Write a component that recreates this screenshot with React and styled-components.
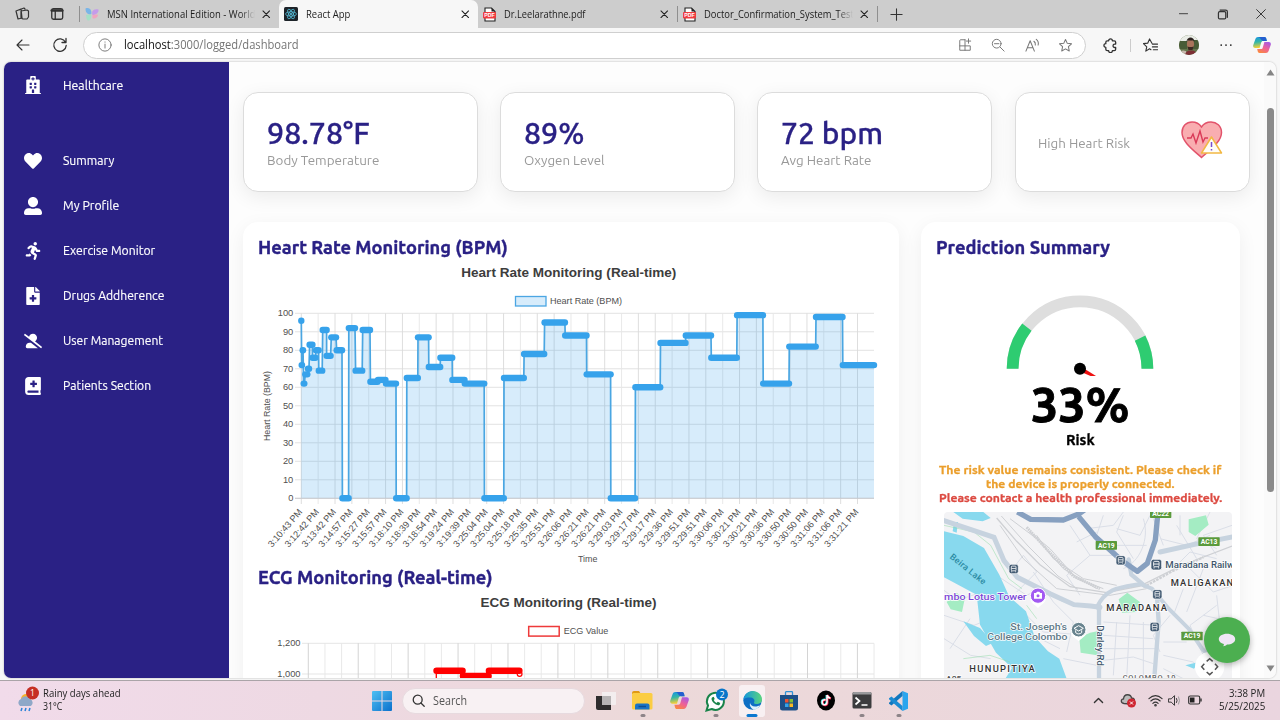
import React, { useLayoutEffect, useRef, useState } from "react";
import styled, { createGlobalStyle } from "styled-components";
import {
  FaHospital, FaHeart, FaUserAlt, FaRunning, FaFileMedical, FaUserAltSlash, FaBookMedical,
} from "react-icons/fa";

const ubuntu = `Ubuntu, "Noto Sans", sans-serif`;
const segoe = `"Segoe UI", "Open Sans", sans-serif`;
const arial = `Arial, "Liberation Sans", sans-serif`;

const GlobalStyle = createGlobalStyle`
  * { box-sizing: border-box; }
  body { margin: 0; overflow: hidden; font-family: ${ubuntu}; }
  svg { display: block; flex: none; }
`;

/* ---------- text that keeps a given line width ---------- */
const FitBox = styled.span`
  display: block;
  flex: none;
  width: ${(p) => p.$w}px;
  white-space: nowrap;
`;
const FitInner = styled.span`
  display: inline-block;
  transform-origin: 0 50%;
`;
function Fit({ w, children }) {
  const ref = useRef(null);
  const [scale, setScale] = useState(1);
  useLayoutEffect(() => {
    setScale(w / ref.current.offsetWidth);
  }, [w]);
  return (
    <FitBox $w={w}>
      <FitInner ref={ref} style={{ transform: `scaleX(${scale})` }}>{children}</FitInner>
    </FitBox>
  );
}

/* ---------- browser frame ---------- */
const Screen = styled.div`
  width: 1280px;
  height: 720px;
  display: flex;
  flex-direction: column;
  background: #f7f7f7;
  overflow: hidden;
`;
const TabStrip = styled.div`
  height: 28px;
  flex: none;
  display: flex;
  align-items: center;
  background: #cdcdcd;
  font: 11.5px ${segoe};
  color: #1c1c1c;
`;
const Slot = styled.span`
  display: flex;
  flex: none;
  align-items: center;
  justify-content: center;
  width: ${(p) => p.$w || 20}px;
  margin-left: ${(p) => p.$ml || 0}px;
`;
const Divider = styled.span`
  width: 1px;
  height: ${(p) => p.$h || 16}px;
  flex: none;
  margin-left: ${(p) => p.$ml || 0}px;
  background: ${(p) => p.$c || "#8f8f8f"};
`;
const Tab = styled.div`
  height: 28px;
  flex: none;
  width: ${(p) => p.$w}px;
  display: flex;
  align-items: center;
  padding-left: ${(p) => p.$pl || 5}px;
  padding-right: 5px;
  border-radius: 7px 7px 0 0;
  background: ${(p) => (p.$active ? "#f7f7f7" : "transparent")};
`;
const TabLabel = styled.span`
  flex: 1;
  margin-left: 8px;
  overflow: hidden;
  line-height: 18px;
  mask-image: ${(p) => (p.$fade ? "linear-gradient(90deg,#000 90%,transparent 100%)" : "none")};
`;
const WindowButtons = styled.div`
  margin-left: auto;
  display: flex;
  align-items: center;
  gap: 19px;
  padding-right: 9px;
`;
const Toolbar = styled.div`
  height: 34px;
  flex: none;
  display: flex;
  align-items: center;
  background: #f7f7f7;
`;
const AddressBar = styled.div`
  width: 1003px;
  height: 27px;
  margin-left: 13px;
  padding: 0 10px 0 14px;
  display: flex;
  align-items: center;
  border: 1px solid #cfcfcf;
  border-radius: 14px;
  background: #fff;
`;
const Url = styled.div`
  flex: 1;
  margin-left: 12px;
  font: 12.3px/18px ${segoe};
  color: #757575;
  b { font-weight: 400; color: #111; }
`;
const Avatar = styled.span`
  width: 20px;
  height: 20px;
  border-radius: 50%;
  overflow: hidden;
`;

/* ---------- application ---------- */
const Viewport = styled.div`
  width: 1272.500px;
  height: 615.500px;
  flex: none;
  margin-left: 3.500px;
  display: flex;
  border-radius: 7px;
  background: #fdfdfd;
  overflow: hidden;
  box-shadow: 0 0 2px rgba(0, 0, 0, 0.3);
`;
const Sidebar = styled.nav`
  width: 225.500px;
  flex: none;
  display: flex;
  flex-direction: column;
  background: #2a2185;
`;
const NavItem = styled.a`
  height: 45px;
  flex: none;
  display: flex;
  align-items: center;
  padding-left: 20.500px;
  gap: 21px;
  color: #fff;
  font: 12.500px/20px ${ubuntu};
  -webkit-text-stroke: 0.150px #fff;
  margin-bottom: ${(p) => (p.$brand ? 30.500 : 0)}px;
  svg { margin-top: 1px; width: 18px; height: 18px; }
`;
const Main = styled.main`
  flex: 1;
  min-width: 0;
  padding: 30px 0 0 14px;
`;
const StatRow = styled.section`
  display: grid;
  grid-template-columns: repeat(4, 235px);
  column-gap: 22.200px;
`;
const StatCard = styled.article`
  height: 100px;
  padding: 0 25px 0 22.500px;
  display: flex;
  align-items: center;
  justify-content: space-between;
  border: 1px solid #dcdcdc;
  border-radius: 15px;
  background: #fff;
  box-shadow: 0 5px 19px rgba(0, 0, 0, 0.075);
  > svg { margin-bottom: 4px; }
`;
const StatValue = styled.div`
  font: 500 29.800px/36px ${ubuntu};
  color: #2a2185;
  -webkit-text-stroke: 0.300px #2a2185;
`;
const StatLabel = styled.div`
  font: 13.800px/18px ${ubuntu};
  color: #999;
  margin-top: ${(p) => (p.$alone ? 2 : 0)}px;
`;
const Panels = styled.section`
  display: flex;
  align-items: flex-start;
  gap: 22px;
  margin-top: 30px;
`;
const Panel = styled.article`
  width: ${(p) => p.$w}px;
  height: 700px;
  border-radius: 15px;
  padding: 13.500px 15.500px;
  background: #fff;
  box-shadow: 0 5px 19px rgba(0, 0, 0, 0.06);
`;
const Heading = styled.h2`
  margin: 0 0 0 -0.500px;
  font: 700 18px/23px ${ubuntu};
  color: #2a2185;
  -webkit-text-stroke: 0.350px #2a2185;
`;
const ChartBox = styled.div`
  height: ${(p) => p.$h}px;
  margin: 1px 0 -1px -6.500px;
  overflow: hidden;
`;
const GaugeBox = styled.div`
  display: flex;
  flex-direction: column;
  align-items: center;
  padding: 31px 1px 0 0;
`;
const GaugeValue = styled.div`
  font: 700 48px/56px ${ubuntu};
  color: #000;
  -webkit-text-stroke: 0.900px #000;
`;
const GaugeLabel = styled.div`
  margin-top: -1px;
  font: 700 14.300px/18px ${ubuntu};
  -webkit-text-stroke: 0.300px #000;
`;
const Advice = styled.div`
  display: flex;
  flex-direction: column;
  align-items: center;
  margin: 14.500px 0 7px;
  font: 700 11.700px/14px ${ubuntu};
`;
const AdviceLine = styled.div`
  color: ${(p) => (p.$urgent ? "#dc4a41" : "#eb9f2c")};
  -webkit-text-stroke: 0.300px currentColor;
`;
const MapFrame = styled.div`
  width: 288px;
  height: 200px;
  margin-left: 7.500px;
  border-radius: 4px;
  overflow: hidden;
`;
const Scrollbar = styled.div`
  width: 12px;
  flex: none;
  display: flex;
  flex-direction: column;
  align-items: center;
  padding: 6.500px 0 6px;
  background: #fafafa;
`;
const Thumb = styled.div`
  width: 7px;
  height: 384px;
  margin: 32.500px 0 auto;
  border-radius: 4px;
  background: #8a8a8a;
`;
const ChatButton = styled.button`
  position: absolute;
  left: 1204px;
  top: 617px;
  width: 46px;
  height: 46px;
  border: 0;
  padding: 0;
  border-radius: 50%;
  display: grid;
  place-items: center;
  background: #4caf50;
  box-shadow: 0 2px 6px rgba(0, 0, 0, 0.3);
`;

/* ---------- taskbar ---------- */
const Taskbar = styled.footer`
  height: 40px;
  flex: none;
  margin-top: 2.500px;
  display: flex;
  align-items: center;
  border-top: 1px solid #aaa4a8;
  background: linear-gradient(90deg, #f1dbea 0%, #eed9e3 25%, #ecd9d9 50%, #ecd8da 65%, #ead5df 100%);
  font: 10.200px/13px ${segoe};
  color: #222;
`;
const Weather = styled.div`
  width: 370px;
  padding: 0 0 2px 16px;
  display: flex;
  align-items: center;
  gap: 3px;
`;
const SearchBox = styled.div`
  width: 183px;
  height: 26px;
  margin-left: 10px;
  padding-left: 9px;
  display: flex;
  align-items: center;
  gap: 8px;
  border-radius: 13px;
  background: #f8f1f3;
  border: 1px solid #e7dadf;
  font: 12px/18px ${segoe};
  color: #555;
`;
const AppIcon = styled.div`
  position: relative;
  width: 26px;
  height: 32px;
  flex: none;
  margin-left: ${(p) => p.$ml ?? 10.600}px;
  display: grid;
  place-items: center;
  border-radius: 3px;
  background: ${(p) => (p.$active ? "#f8f0f2" : "transparent")};
  &::after {
    content: "";
    display: ${(p) => (p.$open || p.$active ? "block" : "none")};
    position: absolute;
    bottom: 0;
    left: 50%;
    transform: translateX(-50%);
    width: ${(p) => (p.$active ? 11 : 5)}px;
    height: 2.500px;
    border-radius: 2px;
    background: ${(p) => (p.$active ? "#0a78d0" : "#8d8488")};
  }
`;
const Tray = styled.div`
  margin-left: auto;
  padding: 0 15px 1px 0;
  display: flex;
  align-items: center;
`;
const Clock = styled.div`
  margin-left: 12px;
  width: 48px;
  display: flex;
  flex-direction: column;
  align-items: flex-end;
`;

/* ---------- small icons ---------- */
const Line = ({ s = 16, c = "#333", w = 1.1, children, vb = "0 0 16 16" }) => (
  <svg width={s} height={s} viewBox={vb} fill="none" stroke={c} strokeWidth={w} strokeLinecap="round" strokeLinejoin="round">
    {children}
  </svg>
);
const Close = ({ s = 10.5, w = 1.7 }) => <Line s={s} w={w} c="#222"><path d="M3 3l10 10M13 3L3 13" /></Line>;
const Star = "M8 1.6l1.9 4.1 4.5.5-3.3 3.1.9 4.5L8 11.6l-4 2.2.9-4.5L1.6 6.2l4.5-.5z";

const PdfIcon = () => (
  <svg width="13" height="15" viewBox="0 0 13 15">
    <path d="M2 1h6.5L12 4.5V14H2z" fill="#fff" stroke="#222" strokeWidth="1.1" />
    <path d="M8.5 1v3.5H12z" fill="#222" />
    <rect y="5" width="13" height="6.6" rx="1" fill="#f03b3f" />
    <text x="1.3" y="10.2" fontSize="5" fontWeight="700" fill="#fff" fontFamily="Liberation Sans" textLength="10.4" lengthAdjust="spacingAndGlyphs">PDF</text>
  </svg>
);
const MsnIcon = () => (
  <svg width="14" height="14" viewBox="0 0 14 14">
    <path d="M.5 1.500c4-1.500 6 1 6 5L5.500 7.500C2 7.500.5 5 .5 1.500z" fill="#79b5e8" />
    <path d="M1 8c2-1 4.500-.5 5.200-.5.3 3.500-.7 6-2.700 6S1.500 11 1 8z" fill="#a5e0c6" />
    <path d="M7 6c0-3 3-4.500 6.500-3.500C14 5.500 11 8 7.500 8z" fill="#c49bea" />
    <path d="M7.500 8c3-1 5.500-.5 5.500 0-.5 3-4 4.500-5.500 3z" fill="#f0a4c0" />
  </svg>
);
const ReactIcon = () => (
  <svg width="14" height="14" viewBox="0 0 14 14">
    <rect width="14" height="14" rx="1.500" fill="#1d2329" />
    <g fill="none" stroke="#5ccbe8" strokeWidth=".7">
      {[0, 60, 120].map((a) => <ellipse key={a} cx="7" cy="7" rx="5.400" ry="2.100" transform={`rotate(${a} 7 7)`} />)}
    </g>
    <circle cx="7" cy="7" r="1" fill="#5ccbe8" />
  </svg>
);
const Copilot = ({ s = 18 }) => (
  <svg width={s} height={s} viewBox="0 0 18 18">
    <defs>
      <linearGradient id="cpA" x1="0" y1="0" x2="0.2" y2="1">
        <stop offset="0" stopColor="#1793e4" /><stop offset=".5" stopColor="#36b7a5" /><stop offset="1" stopColor="#f6cf34" />
      </linearGradient>
      <linearGradient id="cpB" x1=".8" y1="0" x2="0.2" y2="1">
        <stop offset="0" stopColor="#a45be6" /><stop offset=".5" stopColor="#ee6197" /><stop offset="1" stopColor="#fb8a3c" />
      </linearGradient>
    </defs>
    <path d="M5 1h6.500c1 0 1.500.8 1.800 1.700L13.800 5H10c-1 0-1.500.7-1.800 1.600L6.600 12H2.200C.5 12-.2 10.700.3 9L2.400 3C2.900 1.800 3.700 1 5 1z" fill="url(#cpA)" />
    <path d="M5.500 1h6c1 0 1.500.8 1.800 1.700L13.800 5H10.500C8 5 8 2 5.500 1z" fill="#245fd0" />
    <path d="M13 17H6.500c-1 0-1.500-.8-1.800-1.700L4.200 13H8c1 0 1.500-.7 1.800-1.600L11.400 6h4.400c1.700 0 2.400 1.300 1.900 3l-2.100 6c-.5 1.200-1.300 2-2.600 2z" fill="url(#cpB)" />
  </svg>
);
const HeartRisk = () => (
  <svg width="44" height="40" viewBox="0 0 44 40">
    <path d="M21.500 37.500C12 29 2 21.500 2 12.500 2 6 6.500 2 12 2c4 0 7.500 2 9.500 5C23.500 4 27 2 31 2c5.500 0 10.500 4 10.500 10.500C41.500 21.500 31 29 21.500 37.500z" fill="#f9adb0" stroke="#e2536b" strokeWidth="1.500" />
    <path d="M7 18h4l2-4 3 9 4-12 3 11 2-4h3" fill="none" stroke="#da3a58" strokeWidth="1.400" />
    <path d="M31.500 17L41.500 33h-20z" fill="#fffdf6" stroke="#f2b844" strokeWidth="1.500" strokeLinejoin="round" />
    <path d="M31.500 22v5M31.500 29v1.500" stroke="#7a4fd0" strokeWidth="1.500" />
  </svg>
);

/* ---------- charts ---------- */
const TICKS = ["3:10:43", "3:12:42", "3:13:42", "3:14:57", "3:15:27", "3:15:57", "3:18:10", "3:18:39", "3:18:54", "3:19:24", "3:19:39", "3:25:04", "3:25:04", "3:25:18", "3:25:35", "3:25:51", "3:26:06", "3:26:21", "3:26:21", "3:29:03", "3:29:17", "3:29:17", "3:29:36", "3:29:51", "3:29:51", "3:30:06", "3:30:21", "3:30:21", "3:30:36", "3:30:50", "3:30:50", "3:31:06", "3:31:06", "3:31:21"];

/* start, end (px inside the chart) and bpm of every run of readings */
const RUNS = [
  [49.3, 49.3, 96], [49.7, 50, 72], [50.7, 51, 80], [51.7, 52.3, 62], [53.3, 55.3, 67], [56, 57, 70],
  [57.6, 60.4, 83], [60.6, 63.4, 76], [64, 66.6, 80], [66.8, 70.2, 69], [70.7, 74.6, 91], [74.6, 78.6, 77],
  [79.3, 84, 87], [84.7, 90, 80], [90.4, 96.6, 0], [96.8, 103, 92], [103.6, 110.2, 69], [110.7, 118, 91],
  [118.4, 125.5, 63], [126, 133.4, 64], [134, 144, 62], [144.2, 154.6, 0], [154.8, 165.8, 65], [166, 176.6, 87],
  [176.8, 188.2, 71], [188.4, 200.2, 76], [200.4, 212.5, 64], [212.8, 232.2, 62], [232.4, 251.8, 0],
  [252, 271.8, 65], [272.1, 292.2, 78], [292.6, 312.9, 95], [313.2, 334.5, 88], [334.7, 358.6, 67],
  [358.8, 383.1, 0], [383.4, 408.2, 60], [408.5, 433.5, 84], [433.8, 459, 88], [459.3, 484.8, 76],
  [485.1, 510.9, 99], [511.2, 537, 62], [537.3, 563.7, 82], [564, 590.5, 98], [590.8, 622, 72],
];
const hy = (v) => 238.3 - v * 1.85;

function HeartChart() {
  const pts = RUNS.flatMap(([a, b, v]) => [`${a},${hy(v)}`, `${b},${hy(v)}`]).join(" ");
  return (
    <svg width="640" height="306" viewBox="0 0 640 306" fontFamily={arial} fill="#505050">
      <text x="209.300" y="17.300" fontSize="13.300" fontWeight="700" fill="#3d3d3d" textLength="215" lengthAdjust="spacingAndGlyphs">Heart Rate Monitoring (Real-time)</text>
      <rect x="263.500" y="36.500" width="30.500" height="9.500" fill="#d7ecfb" stroke="#4ba6e3" strokeWidth="1.300" />
      <text x="298" y="44.400" fontSize="9.800" textLength="72" lengthAdjust="spacingAndGlyphs">Heart Rate (BPM)</text>
      <text x="17.500" y="181" fontSize="9.800" transform="rotate(-90 17.500 181)" textLength="70" lengthAdjust="spacingAndGlyphs">Heart Rate (BPM)</text>
      {Array.from({ length: 11 }, (_, i) => (
        <g key={i}>
          <path d={`M43 ${hy(i * 10)}H622`} stroke="#dfdfdf" strokeWidth=".9" />
          <text x="41.300" y={hy(i * 10) + 2.9} textAnchor="end" fontSize="9.300">{i * 10}</text>
        </g>
      ))}
      {TICKS.map((t, i) => {
        const x = 49.3 + i * 16.855;
        return (
          <g key={i}>
            <path d={`M${x} 53.300V244`} stroke={i % 3 === 1 ? "#e6e6e6" : "#dadada"} strokeWidth=".9" />
            <text x={x + 1.5} y="252.300" textAnchor="end" fontSize="9.200" textLength="47" lengthAdjust="spacingAndGlyphs" transform={`rotate(-49 ${x + 1.5} 252.300)`}>{t} PM</text>
          </g>
        );
      })}
      <polygon points={`49.3,${hy(0)} ${pts} 622,${hy(0)}`} fill="#36a2eb" fillOpacity=".2" />
      <path d={`M43 ${hy(0)}H622`} stroke="#c7c7cc" strokeWidth=".9" />
      <polyline points={pts} fill="none" stroke="#4aa6e2" strokeWidth="1.700" />
      {RUNS.map(([a, b, v], i) => (
        <path key={i} d={`M${a} ${hy(v)}H${b + 0.01}`} stroke="#36a2eb" strokeWidth="6.400" strokeLinecap="round" />
      ))}
      <text x="326" y="302" fontSize="9.500" textLength="19.500" lengthAdjust="spacingAndGlyphs">Time</text>
    </svg>
  );
}

function EcgChart() {
  return (
    <svg width="640" height="110" viewBox="0 0 640 110" fontFamily={arial} fill="#505050">
      <text x="228.500" y="17.300" fontSize="13.300" fontWeight="700" fill="#3d3d3d" textLength="176" lengthAdjust="spacingAndGlyphs">ECG Monitoring (Real-time)</text>
      <rect x="276.700" y="36.500" width="30.500" height="9.600" fill="#fff" stroke="#ee3a3a" strokeWidth="1.500" />
      <text x="311.700" y="44.400" fontSize="9.800" textLength="44.500" lengthAdjust="spacingAndGlyphs">ECG Value</text>
      <text x="48.500" y="56.300" textAnchor="end" fontSize="9.300">1,200</text>
      <text x="48.500" y="87.300" textAnchor="end" fontSize="9.300">1,000</text>
      <path d="M50 53.300H622M50 84H622" stroke="#e2e2e2" strokeWidth=".9" />
      {Array.from({ length: 35 }, (_, i) => (
        <path key={i} d={`M${56.3 + i * 16.64} 53.300V110`} stroke={i % 3 ? "#e6e6e6" : "#cfcfcf"} strokeWidth=".9" />
      ))}
      <g stroke="#ff0000" fill="none">
        <path d="M184.300 82V110" strokeWidth="1.300" />
        <path d="M184.600 80.800H210.500M237 80.800H267.300M211 86H236.500" strokeWidth="6.600" strokeLinecap="round" />
        <circle cx="267.600" cy="84" r="2.400" strokeWidth="1.200" />
      </g>
    </svg>
  );
}

const arc = (from, to) => {
  const p = (deg) => {
    const r = (deg * Math.PI) / 180;
    return `${80 + 67.4 * Math.cos(r)} ${78.7 - 67.4 * Math.sin(r)}`;
  };
  return `M${p(from)}A67.4 67.4 0 0 1 ${p(to)}`;
};
const Gauge = () => (
  <svg width="160" height="86" viewBox="0 0 160 86" fill="none" strokeWidth="11.800">
    <path d={arc(180, 0)} stroke="#dedede" />
    <path d={arc(180, 142)} stroke="#2ecc71" />
    <path d={arc(27, 0)} stroke="#2ecc71" />
    <path d="M80 76L96 86H90.500L79 81z" fill="#ee1111" />
    <circle cx="80" cy="78.700" r="6" fill="#000" />
  </svg>
);

/* ---------- map ---------- */
const TransitStop = ({ x, y, s = 26 }) => (
  <g transform={`translate(${x} ${y}) scale(${s / 24})`}>
    <rect x="-13" y="-13" width="26" height="26" rx="6" fill="#425a72" stroke="#fff" strokeWidth="2" />
    <rect x="-6.500" y="-8" width="13" height="13" rx="2.500" fill="none" stroke="#fff" strokeWidth="2.200" />
    <path d="M-6-1.500H6M-5.500 9v-3M5.500 9v-3" stroke="#fff" strokeWidth="2.200" />
  </g>
);
const RoadBadge = ({ x, y, children }) => (
  <g>
    <rect x={x - 32} y={y - 13} width="64" height="26" rx="2" fill="#5a9a3c" />
    <text x={x - 25} y={y + 7} fontSize="19" fontWeight="700" fill="#fff" textLength="50" lengthAdjust="spacingAndGlyphs">{children}</text>
  </g>
);
const CityMap = () => (
  <svg width="288" height="200" viewBox="42 20 864 600" fontFamily="Roboto">
    <rect x="42" y="20" width="864" height="600" fill="#f3f3f5" />
    {/* minor streets */}
    <g fill="none" stroke="#dadee7" strokeWidth="3">
      <path d="M42 255l40 30 60-20M42 330l90 30 50-20M60 430l60-90M42 400l80 50 60 10M200 210l90 60 40-20 70 40M240 200l40-50 40 50-60 60M310 200l60 90 60 60-20 90M290 330l50 50 140 10M330 400l60 30M400 460l100 20M420 60l60 90-70 60 40 60M520 30l-20 60 60 50M560 70l70 20 30-60M480 150l80 0 60 70M530 120l120 0M580 30l-20 50 50 80M700 120l-30-80M690 100l80 20 70-30M740 60l60 100M750 30v60M840 20l-40 80 60 30M720 200l60-60 80 20M770 180l80 80 60-20M760 250l-30 80 70 60M820 190l-50 130M860 300l-80 60 40 90M720 330l-50 60 20 50M520 350l160 10M520 390l150 10M520 430l160 0M520 465l90-10 60 20M560 350l-10 160M600 330l-10 190M640 350v170M700 450l90 20 40 50M700 490l60 30M770 410l-70 0M830 380l76 30M860 270l20 180M910 350l-90-20" />
      <path d="M470 70l80-10 30-40M640 40c20 60-10 130-60 150M440 110l60-30M860 150l-40-60 86-30" />
    </g>
    {/* parks */}
    <g fill="#a4ecc3">
      <path d="M776 42l52-12 8 28-40 34-20-12zM448 398l32-16 22-4v72l-50-8zM566 282l26-20 38 28-10 30-44 2zM50 290l30-28 24 20-8 38-34-8z" />
    </g>
    {/* lake and canal */}
    <g fill="#88d9ee">
      <path d="M42 78l58 14 62 36 46 80 30 66 50 44 26 76 40 44 34 22 22 60v100H236l-10-100 20-32-48-46-22-38-26-46-10-90-98-52z" />
      <path d="M70 20h90l22 18-24 10-60-8zM72 50l12 0-4 32-12-4zM100 348l50 20 40 44-22 10-36-30zM766 480l40-10-14 20z" />
    </g>
    <path d="M42 60l90 20 50 40 54 100 40 30M240 470l-60-20-80 10M290 300l30 40" fill="none" stroke="#8edba4" strokeWidth="1.500" />
    {/* railway yard */}
    <g fill="none" stroke="#ced0d4">
      <path d="M200 38l60 70 70 70 90 66 110 18 100-20 120-60 156-60" strokeWidth="4" />
      <path d="M214 32l80 90 90 90 60 40M240 40l80 60 80 90 100 60M300 80l60 50 80 90 80 30M210 60l70 100 100 90 160 20 110-20M320 90l50 70 90 60 100 20" strokeWidth="3" />
      <path d="M290 66l70 76 70 70 80 38" strokeWidth="9" strokeDasharray="5 2" />
      <path d="M640 246l90-50 90-40" strokeWidth="7" strokeDasharray="8 3" />
    </g>
    {/* roads */}
    <g fill="none" stroke="#c7d3df" strokeLinecap="round">
      <path d="M42 46l90 30 60 20 30 70 40 50 100 50 70 32 50 4 28 4" strokeWidth="15" />
      <path d="M500 306c30-60 70-60 130-70l36 14 50 60 60 60 40 60 60 60" strokeWidth="12" />
      <path d="M507 300v230M640 238l-36-30-8-46M680 260l6 90-14 180" strokeWidth="13" />
      <path d="M690 140l100-22 120-24" strokeWidth="15" />
    </g>
    <g fill="none" stroke="#87a0c0" strokeLinejoin="round">
      <path d="M262 20l40 22 98 2 46-18 20-14M446 34l50 60 80 72 46 32 30-24 24-70 8-84" strokeWidth="16" />
    </g>
    {/* labels */}
    <RoadBadge x={529} y={120}>AC19</RoadBadge>
    <RoadBadge x={837} y={109}>AC13</RoadBadge>
    <RoadBadge x={692} y={25}>AC22</RoadBadge>
    <RoadBadge x={786} y={392}>AC19</RoadBadge>
    <text x="58" y="157" transform="rotate(39 58 157)" fontSize="26" fontWeight="500" fill="#2a8aa2" textLength="130">Beira Lake</text>
    <g stroke="#fff" strokeWidth="4" paintOrder="stroke" fontWeight="500">
      <text x="24" y="285" fontSize="29" fill="#7c47d6" textLength="266" lengthAdjust="spacingAndGlyphs">ombo Lotus Tower</text>
      <text x="241" y="373" fontSize="28" fill="#5f7a88" textLength="170" lengthAdjust="spacingAndGlyphs">St. Joseph's</text>
      <text x="172" y="403" fontSize="28" fill="#5f7a88" textLength="240" lengthAdjust="spacingAndGlyphs">College Colombo</text>
      <text x="706" y="188" fontSize="29" fill="#40566b" textLength="236" lengthAdjust="spacingAndGlyphs">Maradana Railway</text>
      <text x="722" y="243" fontSize="28" fill="#333" textLength="231">MALIGAKANDA</text>
      <text x="529" y="317" fontSize="28" fill="#333" textLength="182">MARADANA</text>
      <text x="118" y="499" fontSize="28" fill="#333" textLength="196">HUNUPITIYA</text>
      <text x="578" y="525" fontSize="22" fill="#666" textLength="158">COLOMBO 10</text>
      <text x="48" y="526" fontSize="22" fill="#555" textLength="46" lengthAdjust="spacingAndGlyphs">A05</text>
      <text x="501" y="360" transform="rotate(90 501 360)" fontSize="28" fill="#40566b" textLength="122" lengthAdjust="spacingAndGlyphs">Darley Rd</text>
    </g>
    <TransitStop x={251} y={191} />
    <TransitStop x={572} y={165} />
    <TransitStop x={679} y={178} s={30} />
    <TransitStop x={682} y={267} />
    <TransitStop x={674} y={365} />
    <g>
      <path d="M300 274c0 20 14 22 24 34 10-12 24-14 24-34z" fill="#fff" />
      <circle cx="324" cy="271" r="23" fill="#a259f2" stroke="#fff" strokeWidth="3" />
      <path d="M312 263h6l3-4h7l3 4h5v17h-24z" fill="#fff" />
      <circle cx="324" cy="271" r="4.500" fill="#a259f2" />
    </g>
    <g>
      <path d="M422 376c0 20 14 20 24 32 10-12 24-14 24-32z" fill="#fff" />
      <circle cx="446" cy="373" r="22" fill="#69848f" stroke="#fff" strokeWidth="3" />
      <path d="M432 369l14-8 14 8-14 8zM437 375v7c6 5 12 5 18 0v-7" fill="none" stroke="#fff" strokeWidth="3" />
    </g>
    <circle cx="839" cy="484" r="44" fill="#fff" />
    <path d="M830 468l9-8 9 8M830 500l9 8 9-8M823 475l-8 9 8 9M855 475l8 9-8 9" fill="none" stroke="#555" strokeWidth="4.500" />
  </svg>
);

/* ---------- page data ---------- */
const NAV = [
  [FaHospital, "Healthcare", 60], [FaHeart, "Summary", 51.5], [FaUserAlt, "My Profile", 56],
  [FaRunning, "Exercise Monitor", 92], [FaFileMedical, "Drugs Addherence", 101],
  [FaUserAltSlash, "User Management", 100], [FaBookMedical, "Patients Section", 88.5],
];
const STATS = [
  ["98.78°F", 103, "Body Temperature", 112],
  ["89%", 60, "Oxygen Level", 81],
  ["72 bpm", 102.5, "Avg Heart Rate", 90],
];

export default function App() {
  return (
    <Screen>
      <GlobalStyle />
      <TabStrip>
        <Slot $ml={12}><Line w={1.2}><path d="M2 5l5-2 1 9-4 1zM5 4l5-2 1 1M7 5l6-1 1.500 1v6l-1.500 2H9L7 12z" /></Line></Slot>
        <Slot $ml={15}><Line s={14} w={1.5}><rect x="2" y="2" width="12.500" height="12" rx="2" /><path d="M2 4h12" strokeWidth="3" /><path d="M6 5v9" /></Line></Slot>
        <Divider $ml={12} />
        <Tab $w={199}><MsnIcon /><TabLabel $fade><Fit w={157}>MSN International Edition - World n</Fit></TabLabel><Slot $ml={3} $w={16}><Close /></Slot></Tab>
        <Tab $active $w={199}><ReactIcon /><TabLabel><Fit w={44.5}>React App</Fit></TabLabel><Slot $w={16}><Close /></Slot></Tab>
        <Tab $w={199}><PdfIcon /><TabLabel><Fit w={81.5}>Dr.Leelarathne.pdf</Fit></TabLabel><Slot $w={16}><Close /></Slot></Tab>
        <Divider />
        <Tab $w={199} $pl={4.5}><PdfIcon /><TabLabel $fade><Fit w={149.5}>Doctor_Confirmation_System_Test</Fit></TabLabel><Slot $ml={3} $w={16}><Close /></Slot></Tab>
        <Divider />
        <Slot $ml={8}><Line s={15}><path d="M2 8h12M8 2v12" /></Line></Slot>
        <WindowButtons>
          <Slot><Line s={13}><path d="M3 7h10" /></Line></Slot>
          <Slot><Line s={13} w={1.5}><rect x="3" y="4.500" width="9" height="9" rx="1.500" /><path d="M5 2.500h7q2 0 2 2v7" /></Line></Slot>
          <Slot><Line s={14} w={1.1}><path d="M3 3l10 10M13 3L3 13" /></Line></Slot>
        </WindowButtons>
      </TabStrip>
      <Toolbar>
        <Slot $ml={13}><Line s={16}><path d="M14 8H2M7 3L2 8l5 5" /></Line></Slot>
        <Slot $ml={17}><Line s={16} w={1.3}><path d="M13.500 5.200A6.200 6.200 0 1 0 14.200 8.500M14 1.500v4h-4" /></Line></Slot>
        <AddressBar>
          <Line s={14} c="#6b6b6b" w={1}><circle cx="8" cy="8" r="7" /><path d="M8 7v4.500M8 4.500v.3" /></Line>
          <Url><Fit w={174.5}><b>localhost</b>:3000/logged/dashboard</Fit></Url>
          <Slot><Line s={14} c="#777"><path d="M8 2H3Q2 2 2 3v11h12V9H2M8 2v12M12 1v5M9.500 3.500h5" /></Line></Slot>
          <Slot $ml={13}><Line s={14} c="#777"><circle cx="6.500" cy="6.500" r="5" /><path d="M10.500 10.500L15 15M4 6.500h5" /></Line></Slot>
          <Slot $ml={14}><Line s={15} c="#777"><path d="M1 14L5.500 3 10 14M2.500 10.500h6M9.500 3.500q2 1.500 1.500 4M12 1.500q3 2.500 2 6" /></Line></Slot>
          <Slot $ml={13}><Line s={15} c="#777"><path d={Star} /></Line></Slot>
        </AddressBar>
        <Slot $ml={14}><Line s={15} w={1.4}><path d="M4.500 3H6a2 2 0 0 1 4 0h2q1.500 0 1.500 1.500V6.500h-1a1.800 1.800 0 0 0 0 3.600h1v1.900q0 1.500-1.500 1.500H10a2 2 0 0 1-4 0H4.500Q3 13.500 3 12v-2a2 2 0 0 1 0-4V4.500Q3 3 4.500 3z" /></Line></Slot>
        <Divider $ml={10} $h={13} $c="#ccc" />
        <Slot $ml={9}><Line s={15} w={1.2}><path d="M9.500 5.500L7 1 5 5.500l-4.500.5L4 9.500 3 14l4-2.500 1.500 1M10 6.500h5.500M10 9.500h5.500M11 12.500h4.500" /></Line></Slot>
        <Slot $ml={19}>
          <Avatar>
            <svg width="20" height="20" viewBox="0 0 20 20">
              <rect width="20" height="20" fill="#65764d" /><path d="M0 0h20v6H0z" fill="#e9ece6" /><path d="M0 6h8v8H0zM14 5h6v9h-6z" fill="#485c36" />
              <ellipse cx="11.500" cy="9" rx="3.600" ry="5" fill="#a9745b" /><path d="M7.500 7c0-6 8-6 8 0l-1-1.500h-6z" fill="#2c2320" /><path d="M8.500 11.500q3 1 6 0L13.500 15H9.500z" fill="#3b2922" /><path d="M0 20q1-6 7-4l1 4z" fill="#c7b8ad" /><path d="M6 20q1-5 6-4.500 5-.5 6 4.500z" fill="#7d2f35" />
            </svg>
          </Avatar>
        </Slot>
        <Slot $ml={17}><Line s={14} c="#222" w={2}><path d="M2.500 8h.01M8 8h.01M13.500 8h.01" /></Line></Slot>
        <Slot $ml={16}><Copilot /></Slot>
      </Toolbar>

      <Viewport>
        <Sidebar>
          {NAV.map(([Icon, label, w], i) => (
            <NavItem key={label} $brand={i === 0}><Icon /><Fit w={w}>{label}</Fit></NavItem>
          ))}
        </Sidebar>
        <Main>
          <StatRow>
            {STATS.map(([value, vw, label, lw]) => (
              <StatCard key={label}>
                <div><StatValue><Fit w={vw}>{value}</Fit></StatValue><StatLabel><Fit w={lw}>{label}</Fit></StatLabel></div>
              </StatCard>
            ))}
            <StatCard><StatLabel $alone><Fit w={92}>High Heart Risk</Fit></StatLabel><HeartRisk /></StatCard>
          </StatRow>
          <Panels>
            <Panel $w={656}>
              <Heading><Fit w={249.5}>Heart Rate Monitoring (BPM)</Fit></Heading>
              <ChartBox $h={307}><HeartChart /></ChartBox>
              <Heading><Fit w={234.5}>ECG Monitoring (Real-time)</Fit></Heading>
              <ChartBox $h={110}><EcgChart /></ChartBox>
            </Panel>
            <Panel $w={318.5}>
              <Heading><Fit w={174}>Prediction Summary</Fit></Heading>
              <GaugeBox>
                <Gauge />
                <GaugeValue><Fit w={98}>33%</Fit></GaugeValue>
                <GaugeLabel><Fit w={28.5}>Risk</Fit></GaugeLabel>
              </GaugeBox>
              <Advice>
                <AdviceLine><Fit w={282}>The risk value remains consistent. Please check if</Fit></AdviceLine>
                <AdviceLine><Fit w={188.5}>the device is properly connected.</Fit></AdviceLine>
                <AdviceLine $urgent><Fit w={283.5}>Please contact a health professional immediately.</Fit></AdviceLine>
              </Advice>
              <MapFrame><CityMap /></MapFrame>
            </Panel>
          </Panels>
        </Main>
        <Scrollbar>
          <svg width="9" height="7" viewBox="0 0 9 7"><path d="M4.500.5L8.500 6.500H.5z" fill="#858585" /></svg>
          <Thumb />
          <svg width="9" height="7" viewBox="0 0 9 7"><path d="M4.500 6.500L8.500.5H.5z" fill="#858585" /></svg>
        </Scrollbar>
      </Viewport>
      <ChatButton aria-label="Chat">
        <svg width="18" height="14" viewBox="0 0 18 14"><path d="M9 .8c4.600 0 8.200 2.300 8.200 5.400S13.600 11.500 9 11.500c-1 1.200-2.500 1.700-4 1.700.8-.7 1-1.500.8-2.300C2.900 10.100.8 8.500.8 6.200.8 3.100 4.400.8 9 .8z" fill="#efe6f5" /></svg>
      </ChatButton>

      <Taskbar>
        <Weather>
          <svg width="24" height="28" viewBox="0 0 24 28">
            <circle cx="10" cy="13" r="5" fill="#f5b32e" /><path d="M4 20a4 4 0 0 1 1-7 5 5 0 0 1 9 0 4 4 0 0 1 1 7z" fill="#8fa8c8" />
            <path d="M6 22l-1 3M10 22l-1 3M14 22l-1 3" stroke="#2b83d8" strokeWidth="1.500" />
            <circle cx="16.500" cy="7" r="6.500" fill="#c62f24" /><text x="16.500" y="10" textAnchor="middle" fontSize="8.500" fill="#fff">1</text>
          </svg>
          <div><Fit w={78}>Rainy days ahead</Fit><Fit w={19}>31°C</Fit></div>
        </Weather>
        <Slot $ml={1} $w={21}>
          <svg width="20" height="20" viewBox="0 0 20 20"><defs><linearGradient id="win" x1="0" y1="0" x2="1" y2="1"><stop offset="0" stopColor="#4fc0f3" /><stop offset="1" stopColor="#0a70cc" /></linearGradient></defs><path d="M0 1q0-1 1-1h8.500v9.500H0zM10.500 0H19q1 0 1 1v8.500h-9.500zM0 10.500h9.500V20H1q-1 0-1-1zM10.500 10.500H20V19q0 1-1 1h-8.500z" fill="url(#win)" /></svg>
        </Slot>
        <SearchBox><Line s={13} w={1.6}><circle cx="7" cy="7" r="5.500" /><path d="M11 11l4 4" /></Line><Fit w={34}>Search</Fit></SearchBox>
        <AppIcon $ml={8}><svg width="20" height="18" viewBox="0 0 20 18"><path d="M0 4h15v14H2q-2 0-2-2z" fill="#2e2c2d" /><path d="M6 0h14v12q0 1-1 1H6z" fill="#f4f3f3" opacity=".82" /><path d="M6 4h9v9H6z" fill="#b6b3b4" /></svg></AppIcon>
        <AppIcon $open><svg width="21" height="19" viewBox="0 0 21 19"><path d="M0 2q0-2 2-2h5l2 3H0z" fill="#e09a14" /><rect y="2" width="20.500" height="16.500" rx="1.500" fill="#fbcd43" /><path d="M3 18.500v-4q0-2 2-2h10.500q2 0 2 2v4z" fill="#1b74c6" /><path d="M6.500 15.500h7.500" stroke="#0e4f93" strokeWidth="1.500" /></svg></AppIcon>
        <AppIcon><Copilot s={19} /></AppIcon>
        <AppIcon $open><svg width="25" height="26" viewBox="0 0 25 26"><path d="M3.500 22.500l1.500-5a8.500 8.500 0 1 1 3.700 3.500z" fill="#fdfdfd" stroke="#188349" strokeWidth="2" /><path d="M9 9.500q-1.500 2 1.500 5.200t6 2.300l.8-2-2.500-1.300-1.300 1.200q-2-.8-2.800-2.800l1-1.200-1-2.200z" fill="#188349" /><circle cx="19" cy="6.500" r="6" fill="#0875c9" /><text x="19" y="9.700" textAnchor="middle" fill="#fff" fontSize="9">2</text></svg></AppIcon>
        <AppIcon $active><svg width="19" height="19" viewBox="0 0 19 19"><defs><linearGradient id="ed"><stop stopColor="#1495dd" /><stop offset="1" stopColor="#5bd67d" /></linearGradient></defs><circle cx="9.500" cy="9.500" r="9.200" fill="#0e6fc4" /><path d="M.3 9C1 3.500 5 0 9.500 0 15 0 19 4 19 8.500c0 3-2.500 4.500-5.500 4.500-2 0-3-.7-2.500-1.500 1.500-3-1-5-4-5S1 7 .3 9z" fill="url(#ed)" /><path d="M7 11.500c0 3 3.500 5 8 3.500q1.500-.8 1.800-.3Q14 18.500 10.500 18.700 6 16 7 11.500z" fill="#dff1fb" /></svg></AppIcon>
        <AppIcon><svg width="18" height="20" viewBox="0 0 18 20"><path d="M5.500 4V1.500Q5.500.7 6.300.7h5.400q.8 0 .8.800V4" fill="none" stroke="#2d91d6" strokeWidth="1.300" /><path d="M0 4h18v13q0 2.500-2.500 2.500h-13Q0 19.500 0 17z" fill="#1d4f87" /><path d="M5 8h3.500v3.500H5z" fill="#ee5230" /><path d="M9.500 8H13v3.500H9.500z" fill="#85bd34" /><path d="M5 12.500h3.500V16H5z" fill="#33a4ea" /><path d="M9.500 12.500H13V16H9.500z" fill="#fab924" /></svg></AppIcon>
        <AppIcon><svg width="20" height="21" viewBox="0 0 20 21"><ellipse cx="10" cy="10.500" rx="9" ry="10" fill="#000" /><g fill="none" strokeWidth="2"><path d="M9 9.500q-3.500-.3-3.300 2.800Q6 15 8.500 14.700q2-.3 2-2.700V5" stroke="#2de1dc" /><path d="M10 10q-3.500-.3-3.300 2.800.3 2.700 2.800 2.400 2-.3 2-2.700V5q.5 3 3.500 3.500" stroke="#fe2c55" /><path d="M9.500 9.800q-3.500-.3-3.300 2.500.3 2.700 2.800 2.400 2-.3 2-2.700V5q.5 2.500 3.300 3" stroke="#fff" strokeWidth="1.500" /></g></svg></AppIcon>
        <AppIcon $open><svg width="20" height="17" viewBox="0 0 19 17"><rect width="19" height="16.500" rx="1.500" fill="#3c3c3e" /><path d="M0 2.500V1.500Q0 0 1.500 0h16Q19 0 19 1.500v1z" fill="#99999c" /><path d="M3 5.500L7 9l-4 3.500M9 13h6" fill="none" stroke="#fff" strokeWidth="1.700" /></svg></AppIcon>
        <AppIcon $open><svg width="19" height="20" viewBox="0 0 19 20"><path d="M13.500 0L19 2.200v15.600L13.500 20z" fill="#2aa5ee" /><path d="M13.500 0v5L2.500 14.500 0 12.800v-1z" fill="#1177be" /><path d="M13.500 20v-5L2.500 5.500 0 7.200v1z" fill="#1b8bd3" /></svg></AppIcon>
        <Tray>
          <Line s={13} w={1.7}><path d="M3 10.500l5-5 5 5" /></Line>
          <Slot $ml={13}><svg width="16" height="16" viewBox="0 0 16 16"><path d="M4 11.500C0 11 1 6.500 3.500 7 4 1 11 2 11.500 6q3 0 3 3l-4 3z" fill="#bbb" stroke="#444" strokeWidth="1.300" /><circle cx="11.500" cy="11" r="4.500" fill="#cf2632" /><path d="M10 9.500l3 3M13 9.500l-3 3" stroke="#fff" /></svg></Slot>
          <Slot $ml={7}><Line s={15} w={1.2}><path d="M1 6q7-6.500 14 0M3 8.500q5-4.500 10 0M5.200 11q2.800-2.500 5.600 0" /><circle cx="8" cy="13" r=".8" /></Line></Slot>
          <Slot $w={18}><Line s={13} w={1.2}><path d="M1 6h3l4-4v12l-4-4H1zM10.500 5.500q1.500 2.500 0 5" /><path d="M13 3.500q2.500 4.500 0 9" stroke="#999" /></Line></Slot>
          <Slot $ml={2}><svg width="14" height="10" viewBox="0 0 14 10"><rect x=".7" y="1" width="11" height="8" rx="1.500" fill="none" stroke="#333" strokeWidth="1.200" /><path d="M2 2.500h4.500v5H2z" fill="#222" /><path d="M13 3.500v3" stroke="#222" strokeWidth="1.300" /></svg></Slot>
          <Clock><Fit w={36}>3:38 PM</Fit><Fit w={46}>5/25/2025</Fit></Clock>
        </Tray>
      </Taskbar>
    </Screen>
  );
}
